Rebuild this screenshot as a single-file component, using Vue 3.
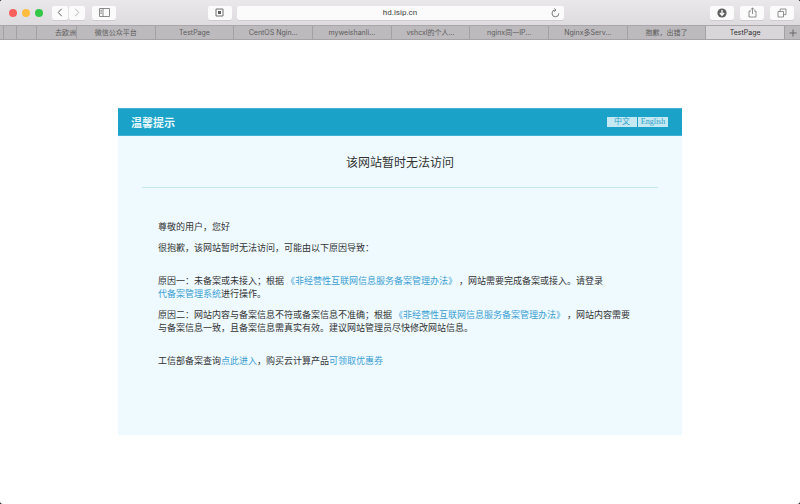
<script setup>
import { ref } from 'vue'

const address = ref('hd.isip.cn')
const active = ref(8)
const tabs = [
  '微信公众平台',
  'TestPage',
  'CentOS Ngin...',
  'myweishanli...',
  'vshcxl的个人...',
  'nginx同一IP...',
  'Nginx多Serv...',
  '抱歉，出错了',
  'TestPage',
]
</script>

<template>
  <div class="window">
    <header class="toolbar">
      <div class="side">
        <div class="lights">
          <button class="light close" aria-label="Close"></button>
          <button class="light minimise" aria-label="Minimise"></button>
          <button class="light expand" aria-label="Full screen"></button>
        </div>
        <div class="history">
          <button class="tool narrow" aria-label="Back">
            <svg width="6" height="9" viewBox="0 0 6 9"><path d="M4.7 .8 1.3 4.5l3.4 3.7" stroke="#606060" /></svg>
          </button>
          <button class="tool narrow" aria-label="Forward">
            <svg width="6" height="9" viewBox="0 0 6 9"><path d="m1.3 .8 3.4 3.7-3.4 3.7" stroke="#b4b4b4" /></svg>
          </button>
        </div>
        <button class="tool" aria-label="Sidebar">
          <svg width="11" height="9" viewBox="0 0 11 9"><path d="M.5.5h10v8H.5zM4 .5v8M1.4 2.3h1.5M1.4 3.8h1.5M1.4 5.3h1.5" stroke="#707070" stroke-width=".8" /></svg>
        </button>
        <button class="tool reader" aria-label="Page settings">
          <svg width="9" height="9" viewBox="0 0 9 9"><path d="M1 1h7v7H1z" stroke="#707070" /><path class="solid" d="M3 3h3v3H3z" /></svg>
        </button>
      </div>
      <div class="address">
        <input v-model="address" aria-label="Address" />
        <button class="reload" aria-label="Reload">
          <svg width="9" height="10" viewBox="0 0 9 10"><path d="M7.8 5.3A3.4 3.4 0 1 1 4.6 2M3.3.4 5 2 3.3 3.7" stroke="#707070" stroke-width=".9" /></svg>
        </button>
      </div>
      <div class="side actions">
        <button class="tool" aria-label="Downloads">
          <svg width="10" height="10" viewBox="0 0 10 10"><circle class="solid" cx="5" cy="5" r="4.6" /><path d="M5 2v5M2.9 5 5 7.2 7.1 5" stroke="#fff" stroke-width="1.3" /></svg>
        </button>
        <button class="tool" aria-label="Share">
          <svg width="9" height="11" viewBox="0 0 9 11"><path d="M3 4H1v6h7V4H6M4.5 7V1M2.7 2.7 4.5.9l1.8 1.8" stroke="#777" stroke-width=".8" /></svg>
        </button>
        <button class="tool" aria-label="Tabs">
          <svg width="10" height="10" viewBox="0 0 10 10"><path d="M1 3.5h5.5V9H1zM3.2 3.5V1H9v5.6H6.5" stroke="#777" stroke-width=".8" /></svg>
        </button>
      </div>
    </header>

    <nav class="tabs">
      <button class="tab sliver" aria-label="Pinned tab"></button>
      <button class="tab pin" aria-label="Pinned tab"></button>
      <button class="tab stub" aria-label="Pinned tab"></button>
      <button class="tab clipped">去欧洲旅</button>
      <button
        v-for="(tab, i) in tabs"
        :key="i"
        class="tab page"
        :class="{ current: i === active }"
        @click="active = i"
      >{{ tab }}</button>
      <button class="tab add" aria-label="New tab">
        <svg width="8" height="8" viewBox="0 0 8 8"><path d="M4 .5v7M.5 4h7" stroke="#666" /></svg>
      </button>
    </nav>

    <main class="content">
      <section class="notice">
        <div class="banner">
          <h1>温馨提示</h1>
          <div class="languages">
            <a href="#zh">中文</a>
            <a href="#en">English</a>
          </div>
        </div>
        <h2>该网站暂时无法访问</h2>
        <div class="message">
          <p>尊敬的用户，您好</p>
          <p>很抱歉，该网站暂时无法访问，可能由以下原因导致：</p>
          <p class="spaced">原因一：未备案或未接入；根据 <a href="#rules">《非经营性互联网信息服务备案管理办法》</a> ，网站需要完成备案或接入。请登录<br /><a href="#system">代备案管理系统</a>进行操作。</p>
          <p>原因二：网站内容与备案信息不符或备案信息不准确；根据 <a href="#rules">《非经营性互联网信息服务备案管理办法》</a> ，网站内容需要<br />与备案信息一致，且备案信息需真实有效。建议网站管理员尽快修改网站信息。</p>
          <p class="spaced">工信部备案查询<a href="#query">点此进入</a>，购买云计算产品<a href="#coupon">可领取优惠券</a></p>
        </div>
      </section>
    </main>
  </div>
</template>

<style>
body {
  margin: 0;
  background: #2b2b2b;
}
</style>

<style scoped>
* {
  box-sizing: border-box;
}
.window {
  display: flex;
  flex-direction: column;
  min-height: 100vh;
  overflow: hidden;
  border-radius: 3px;
  background: #fff;
  font-family: Inter, "Noto Sans CJK SC", sans-serif;
}
button {
  margin: 0;
  padding: 0;
  border: 0;
  font: inherit;
}
svg {
  display: block;
  fill: none;
}
.solid {
  fill: #606060;
}
.toolbar {
  display: grid;
  grid-template-columns: 1fr minmax(0, 327px) 1fr;
  column-gap: 5px;
  align-items: center;
  height: 25px;
  padding: 0 6px;
  background: linear-gradient(#ebe8eb, #dedbde);
}
.side {
  display: flex;
  align-items: center;
}
.lights {
  display: flex;
  gap: 5px;
  margin: 0 9px 0 3px;
}
.light {
  width: 8px;
  height: 8px;
  border-radius: 50%;
}
.close {
  background: #fc605b;
}
.minimise {
  background: #fdbc40;
}
.expand {
  background: #33c748;
}
.history {
  display: flex;
  gap: 1px;
  margin-right: 7px;
}
.tool {
  display: flex;
  align-items: center;
  justify-content: center;
  width: 24px;
  height: 14px;
  border-radius: 2px;
  background: #fbfbfb;
  box-shadow: 0 1px 0 #cfccd0;
}
.narrow {
  width: 16px;
}
.reader {
  margin-left: auto;
}
.actions {
  justify-content: flex-end;
  gap: 6px;
}
.address {
  display: flex;
  position: relative;
  height: 14px;
}
.address input {
  width: 100%;
  padding: 0 16px;
  border: 0;
  border-radius: 2px;
  background: #fbfbfb;
  box-shadow: 0 1px 0 #cfccd0;
  color: #444;
  font: 8px Roboto, sans-serif;
  text-align: center;
}
.reload {
  position: absolute;
  top: 2px;
  right: 4px;
  background: none;
}
.tabs {
  display: flex;
  height: 15px;
  border-top: 1px solid #a9a7a9;
  border-bottom: 1px solid #a5a3a5;
  background: #bcbabc;
}
.tab {
  flex: none;
  overflow: hidden;
  border-right: 1px solid #a3a1a3;
  background: none;
  color: #5c5c5c;
  font-size: 7px;
  line-height: 14px;
  white-space: nowrap;
}
.sliver {
  width: 4px;
}
.pin {
  width: 13px;
}
.stub {
  width: 20px;
}
.clipped {
  width: 40px;
  padding-left: 18px;
  text-align: left;
}
.page {
  flex: 1 1 0;
  min-width: 0;
}
.current {
  background: #d8d6d8;
  color: #333;
}
.add {
  display: flex;
  align-items: center;
  justify-content: center;
  width: 15px;
  border-right: 0;
}
.content {
  flex: 1;
  padding: 68px 16px;
}
.notice {
  max-width: 564px;
  margin: 0 auto;
  padding-bottom: 60px;
  background: #eefaff;
  font-family: "Noto Sans CJK SC", sans-serif;
}
.banner {
  display: flex;
  align-items: center;
  justify-content: space-between;
  height: 28px;
  padding: 0 14px 0 13px;
  border: 1px solid #44b3d3;
  border-width: 1px 0;
  background: #1aa2c9;
}
h1 {
  margin: 0;
  color: #e6f7fb;
  font-size: 11px;
  font-weight: 700;
  line-height: 16px;
}
.languages {
  display: flex;
  gap: 1px;
}
.languages a {
  width: 30px;
  background: #c5e9f3;
  color: #2a9fc8;
  font: 8px/10px "Liberation Serif", "Noto Sans CJK SC", serif;
  text-align: center;
}
a {
  color: #3d9fd3;
  text-decoration: none;
}
h2 {
  margin: 0 24px;
  padding: 16px 0;
  border-bottom: 1px solid #c4e7f2;
  color: #333;
  font-size: 12px;
  font-weight: 400;
  line-height: 19px;
  text-align: center;
}
.message {
  padding: 32px 40px 0;
  color: #333;
  font-size: 9px;
  line-height: 13px;
  text-spacing-trim: space-all;
}
p {
  margin: 0 0 8px;
}
.spaced {
  margin-top: 20px;
}
</style>
